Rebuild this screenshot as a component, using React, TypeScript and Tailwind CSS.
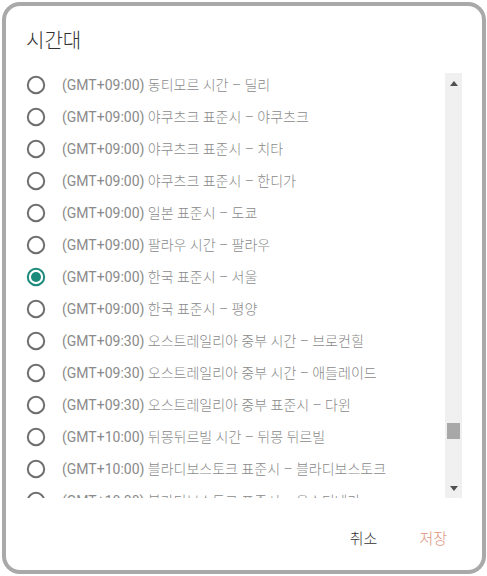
import React from "react";

const rows: string[] = [
  "(GMT+09:00) 동티모르 시간 – 딜리",
  "(GMT+09:00) 야쿠츠크 표준시 – 야쿠츠크",
  "(GMT+09:00) 야쿠츠크 표준시 – 치타",
  "(GMT+09:00) 야쿠츠크 표준시 – 한디가",
  "(GMT+09:00) 일본 표준시 – 도쿄",
  "(GMT+09:00) 팔라우 시간 – 팔라우",
  "(GMT+09:00) 한국 표준시 – 서울",
  "(GMT+09:00) 한국 표준시 – 평양",
  "(GMT+09:30) 오스트레일리아 중부 시간 – 브로컨힐",
  "(GMT+09:30) 오스트레일리아 중부 시간 – 애들레이드",
  "(GMT+09:30) 오스트레일리아 중부 표준시 – 다윈",
  "(GMT+10:00) 뒤몽뒤르빌 시간 – 뒤몽 뒤르빌",
  "(GMT+10:00) 블라디보스토크 표준시 – 블라디보스토크",
  "(GMT+10:00) 블라디보스토크 표준시 – 우스티네라",
];

function Radio({ checked }: { checked: boolean }) {
  return (
    <svg width="20" height="20" viewBox="0 0 20 20" className="shrink-0">
      <circle
        cx="10"
        cy="10"
        r="8.2"
        fill="none"
        stroke={checked ? "#1b8a7b" : "#6e6e6e"}
        strokeWidth="2"
      />
      {checked && <circle cx="10" cy="10" r="5" fill="#1b8a7b" />}
    </svg>
  );
}

function Label({ text }: { text: string }) {
  const tz = text.slice(0, 11);
  const rest = text.slice(11);
  return (
    <span className="ml-[16px] text-[14px] text-[#8a8a8a] whitespace-nowrap">
      <span>{tz}</span>
      <span className="font-light">{rest}</span>
    </span>
  );
}

export default function App() {
  return (
    <div
      className="w-[487px] h-[576px] bg-white pt-[2px] pl-[2px]"
      style={{ fontFamily: "Roboto, 'Noto Sans CJK KR', sans-serif" }}
    >
      <div className="w-[484px] h-[572px] border-4 border-[#a9a9a9] rounded-[18px] bg-white flex flex-col overflow-hidden">
        <div className="pt-[21px] pl-[20px] h-[49px] text-[20px] leading-[28px] font-light text-[#333333]">
          시간대
        </div>
        <div className="mt-[18px] h-[425px] flex pr-[20px]">
          <div className="flex-1 overflow-hidden">
            <div className="-mt-[4px]">
              {rows.map((r, i) => (
                <div key={i} className="h-[32px] flex items-center pl-[20px]">
                  <Radio checked={i === 6} />
                  <Label text={r} />
                </div>
              ))}
            </div>
          </div>
          <div className="w-[17px] bg-[#f0f0f0] flex flex-col items-center">
            <div className="h-[20px] flex items-center justify-center">
              <svg width="8" height="5" viewBox="0 0 8 5">
                <path d="M0 5 L4 0 L8 5 Z" fill="#505050" />
              </svg>
            </div>
            <div className="flex-1 w-full px-[2px] flex flex-col">
              <div className="h-[330px]" />
              <div className="h-[16px] bg-[#a8a8a8]" />
            </div>
            <div className="h-[20px] flex items-center justify-center">
              <svg width="8" height="5" viewBox="0 0 8 5">
                <path d="M0 0 L4 5 L8 0 Z" fill="#505050" />
              </svg>
            </div>
          </div>
        </div>
        <div className="flex justify-end items-start pt-[27px] pr-[23px] gap-[18px]">
          <button className="px-3 h-[28px] leading-[28px] text-[15px] font-light text-[#333333]">
            취소
          </button>
          <button className="px-3 h-[28px] leading-[28px] text-[15px] font-light text-[#e0927b]">
            저장
          </button>
        </div>
      </div>
    </div>
  );
}
